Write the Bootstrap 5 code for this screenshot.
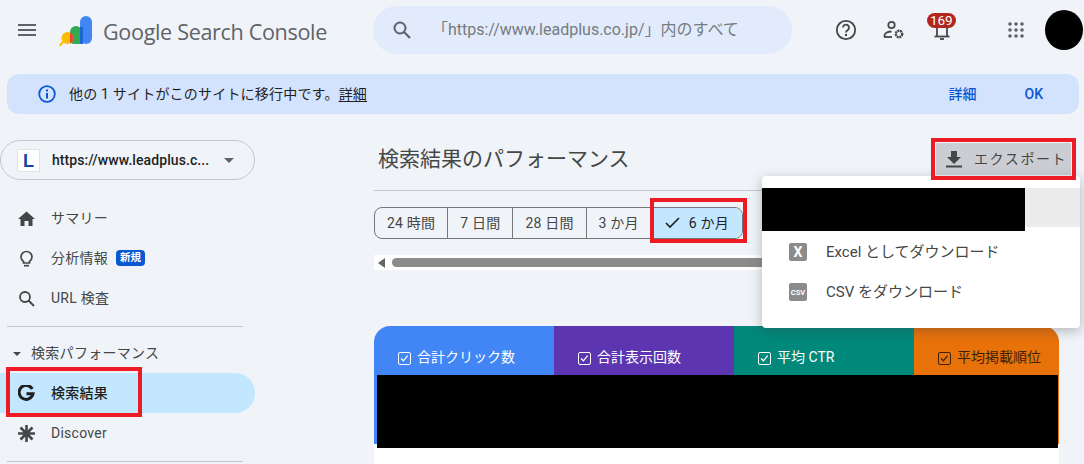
<!doctype html>
<html lang="ja"><head><meta charset="utf-8"><title>Google Search Console</title>
<link href="https://cdn.jsdelivr.net/npm/bootstrap@5.3.0/dist/css/bootstrap.min.css" rel="stylesheet">
<style>
html,body{height:464px;overflow:hidden}
body{background:#f0f4f9;font-family:Roboto,"Noto Sans CJK JP",sans-serif;color:#444746;width:1084px;position:relative}
.topbar{height:60px;padding:0 0 0 16px}
.ico{flex:none;display:block}
.gsc-logo{margin:3px 0 0 22px}
.brand-name{color:#5f6368;margin-left:11px;padding-top:5px;white-space:nowrap;font-family:"Open Sans",Roboto,sans-serif;font-size:21.6px;letter-spacing:-.35px}
.searchbox{width:419px;height:48px;background:#e1ebfc;border-radius:24px;margin-left:46px;padding-left:19px;color:#757b80;font-size:16px;white-space:nowrap}
.searchbox span{margin-left:20px}
.acts{margin-left:30px;gap:0}
.act{width:48px;height:48px;position:relative}
.cnt{position:absolute;left:9px;top:7px;background:#b3261e;color:#fff;font-size:13.5px;line-height:15px;border-radius:8px;padding:0 3px;font-weight:400}
.appsbtn{margin-left:26px}
.avatar{width:38px;height:40px;background:#000;border-radius:50%;margin-left:5px}
.banner{margin:14px 5px 0 7px;height:40px;background:#d3e3fd;border-radius:12px;font-size:14px;letter-spacing:.2px;color:#1f1f1f;padding-left:31px}
.banner u{text-underline-offset:2px}
.banner-msg{margin-left:5px}
.banner .lnk{color:#0b57d0;font-weight:500;letter-spacing:0}
.shell{margin-top:26px}
.side{width:255px;flex:none}
.prop{height:40px;width:255px;border:1px solid #c7c7c7;border-radius:20px;padding-left:16px;font-size:14px;letter-spacing:.08px;color:#1f1f1f;font-weight:500;white-space:nowrap}
.favi{width:23px;height:23px;background:#fff;border:1px solid #e3e3e3;color:#0d47a1;font:700 18px/22px "Liberation Sans",sans-serif;text-align:center;margin-right:12px;letter-spacing:0}
.caret{width:0;height:0;border:5px solid transparent;border-top-color:#5f6368;border-bottom:0;margin-left:15px}
.navlist{margin-top:18px}
.item{height:40px;padding-left:18px;font-size:14px;letter-spacing:.25px;color:#444746;border-radius:0 20px 20px 0}
.item .ico{margin-right:16px}
.item.on{background:#c2e7ff;color:#1f1f1f;font-weight:500}
.newtag{background:#0b57d0;color:#fff;font-size:10.5px;font-weight:700;line-height:16px;border-radius:4px;padding:0 4px;margin-left:8px;letter-spacing:0}
.rule{height:1px;background:#c7c7c7;margin:8px 12px 0 7px}
.sect{height:46px;padding:7px 0 0 13px;font-size:14px;letter-spacing:.3px;margin-bottom:0;font-weight:400;color:#444746}
.sect i{width:0;height:0;border:4px solid transparent;border-top-color:#444746;border-bottom:0;margin-right:10px}
.main{width:685px;margin-left:119px;flex:none}
.titlebar{height:51px;border-bottom:1px solid #c7c7c7;padding-left:4px}
.pagetitle{font-size:21px;font-weight:400;margin:0;color:#444746;position:relative;top:-5px}
.exportb{position:absolute;left:936px;top:143px;width:135px;height:32px;background:#cbcdd2;font-size:14px;color:#444746;padding-left:9px;letter-spacing:1.6px;white-space:nowrap}
.exportb svg{margin-right:11px}
.chips{margin-top:16px;height:32px}
.chipset{border:1px solid #747775;border-radius:8px;height:32px;overflow:hidden;font-size:14px;color:#444746;letter-spacing:.2px;width:369px}
.chipx{padding:0 12px;height:100%;border-right:1px solid #747775;white-space:nowrap}
.chipx.sel{background:#c2e7ff;border-right:0;flex:1;padding-left:13px;color:#1f1f1f}
.chipx.sel svg{margin-right:9px}
.sbar{margin-top:16px;height:15px;background:#fff;padding:3px 0 3px 4px;overflow:hidden}
.sbar i{width:0;height:0;border:5px solid transparent;border-right:7px solid #666;border-left:0;margin:0 7px 0 0}
.sbar b{flex:1;height:9px;background:#8b8b8b;border-radius:5px 0 0 5px}
.tilecard{margin-top:56px;height:138px;background:#fff;border-radius:16px 16px 0 0;overflow:hidden;position:relative}
.tiles{height:118px}
.tilex{width:180px;color:#fff;font-size:14px;padding:21px 0 0 24px;white-space:nowrap;gap:6px;align-items:flex-start}
.t1{background:#4285f4}.t2{background:#5e35b1}.t3{background:#00897b}.t4{background:#e8710a;width:145px;color:#3a2208}
.redact{position:absolute;background:#000}
.redact.main-r{left:3px;top:49px;right:1px;height:73px}
.ckb{width:13px;height:13px;border:1.500px solid currentColor;border-radius:2px;flex:none;margin-top:5px;display:block}
.menu{position:absolute;left:762px;top:176px;width:318px;height:152px;background:#fff;border-radius:4px;box-shadow:0 3px 12px rgba(60,64,67,.35);font-size:15px;color:#444746;z-index:5}
.menu-top{margin-top:16px;margin-bottom:5px;height:39px;background:#ececec}
.menu-top div{width:263px;height:43px;background:#000;margin-top:-4px}
.mrow{height:40px;padding-left:27px}
.mrow svg{margin-right:19px}
.mark-red{position:absolute;border:4px solid #ed1c24;z-index:8;pointer-events:none}
</style></head><body>
<header class="topbar d-flex align-items-center">
<svg class="ico" width="20" height="20" viewBox="0 0 20 20"><path fill="#5f6368" d="M2 4h18v2H2zM2 9h18v2H2zM2 14h18v2H2z"/></svg>
<svg class="ico gsc-logo" width="34" height="34" viewBox="0 0 34 34"><path fill="#fbbc04" d="M1 30l5-6 1.500 1.500-5 6z"/><rect x="22" y="1" width="12" height="28" rx="6" fill="#4285f4"/><path fill="#34a853" d="M12 17a6 6 0 0 1 6-6 6 6 0 0 1 6 6v12H16a4 4 0 0 1-4-4z"/><path fill="#1967d2" d="M22 12h3v17h-3z"/><circle cx="9.500" cy="23" r="6" fill="#fbbc04"/><path fill="#ea4335" d="M12 17.600a6 6 0 0 1 0 10.800z"/></svg>
<div class="brand-name">Google Search Console</div>
<div class="searchbox d-flex align-items-center">
<svg class="ico" width="20" height="20" viewBox="0 0 20 20"><circle cx="8" cy="8" r="5.500" fill="none" stroke="#5f6368" stroke-width="2"/><path stroke="#5f6368" stroke-width="2.200" d="M12 12l6 6"/></svg>
<span>「https://www.leadplus.co.jp/」内のすべて</span></div>
<div class="acts d-flex align-items-center">
<div class="act d-flex align-items-center justify-content-center"><svg width="22" height="22" viewBox="0 0 22 22"><circle cx="11" cy="11" r="9.200" fill="none" stroke="#444746" stroke-width="1.800"/><path d="M8 8.600a3 3 0 1 1 4.800 2.400c-1 .7-1.800 1.200-1.800 2.600" fill="none" stroke="#444746" stroke-width="1.800"/><circle cx="11" cy="16" r="1.200" fill="#444746"/></svg></div>
<div class="act d-flex align-items-center justify-content-center"><svg width="22" height="22" viewBox="0 0 22 22"><circle cx="8.500" cy="6" r="3.200" fill="none" stroke="#444746" stroke-width="1.800"/><path d="M1.500 18v-1.500c0-2.500 3.500-4 7-4" fill="none" stroke="#444746" stroke-width="1.800"/><path d="M1 18h8" stroke="#444746" stroke-width="1.800"/><circle cx="16" cy="15" r="3.200" fill="none" stroke="#444746" stroke-width="2.400" stroke-dasharray="2 .6"/></svg></div>
<div class="act d-flex align-items-center justify-content-center"><svg width="20" height="22" viewBox="0 0 20 22"><path d="M5 18V9a5 5 0 0 1 10 0v9" fill="none" stroke="#444746" stroke-width="1.800"/><path d="M2.500 17.500h15" stroke="#444746" stroke-width="1.800"/><path d="M8 20h4" stroke="#444746" stroke-width="1.800"/></svg><span class="cnt">169</span></div>
<div class="act appsbtn d-flex align-items-center justify-content-center"><svg width="18" height="18" viewBox="0 0 18 18" fill="#5f6368"><circle cx="3" cy="3" r="1.800"/><circle cx="9" cy="3" r="1.800"/><circle cx="15" cy="3" r="1.800"/><circle cx="3" cy="9" r="1.800"/><circle cx="9" cy="9" r="1.800"/><circle cx="15" cy="9" r="1.800"/><circle cx="3" cy="15" r="1.800"/><circle cx="9" cy="15" r="1.800"/><circle cx="15" cy="15" r="1.800"/></svg></div>
<div class="avatar flex-shrink-0"></div>
</div>
</header>
<div class="banner d-flex align-items-center">
<svg class="ico me-2" width="18" height="18" viewBox="0 0 18 18"><circle cx="9" cy="9" r="7.800" fill="none" stroke="#0b57d0" stroke-width="1.800"/><path fill="#0b57d0" d="M8 8h2v5.500H8zM8 4.500h2v2H8z"/></svg>
<div class="banner-msg">他の 1 サイトがこのサイトに移行中です。<u>詳細</u></div>
<div class="lnk ms-auto">詳細</div><div class="lnk" style="margin-left:48px;margin-right:36px">OK</div>
</div>
<div class="shell d-flex">
<nav class="side">
<div class="prop d-flex align-items-center"><div class="favi">L</div>https://www.leadplus.c...<i class="caret"></i></div>
<div class="navlist">
<div class="item d-flex align-items-center"><svg class="ico" width="17" height="17" viewBox="0 0 17 17"><path fill="#444746" d="M8.500 1.500L0 9h2.500v7h4v-5h4v5h4V9H17z"/></svg>サマリー</div>
<div class="item d-flex align-items-center"><svg class="ico" width="17" height="19" viewBox="0 0 17 19"><path d="M5.500 12.500c-1.500-1-2.500-2.500-2.500-4.500a5.500 5.500 0 0 1 11 0c0 2-1 3.500-2.500 4.500v1.500h-6z" fill="none" stroke="#444746" stroke-width="1.700"/><path stroke="#444746" stroke-width="1.700" d="M6 16.700h5"/></svg>分析情報<span class="newtag">新規</span></div>
<div class="item d-flex align-items-center"><svg class="ico" width="17" height="17" viewBox="0 0 17 17"><circle cx="7" cy="7" r="5" fill="none" stroke="#444746" stroke-width="1.800"/><path stroke="#444746" stroke-width="2" d="M10.500 10.500l5.500 5.500"/></svg>URL 検査</div>
</div>
<div class="rule"></div>
<div class="sect d-flex align-items-center"><i></i>検索パフォーマンス</div>
<div class="item on d-flex align-items-center"><svg class="ico" width="17" height="17" viewBox="0 0 17 17"><path fill="none" stroke="#1f1f1f" stroke-width="3" d="M14.300 4a7 7 0 1 0 .7 4.800H8.500"/></svg>検索結果</div>
<div class="item d-flex align-items-center"><svg class="ico" width="17" height="17" viewBox="0 0 17 17"><path stroke="#444746" stroke-width="2.600" d="M8.500 0v17M0 8.500h17M2.500 2.500l12 12M14.500 2.500l-12 12"/></svg>Discover</div>
<div class="rule"></div>
</nav>
<main class="main">
<div class="titlebar d-flex align-items-center"><h1 class="pagetitle">検索結果のパフォーマンス</h1></div>
<div class="chips"><div class="chipset d-flex align-items-center">
<div class="chipx d-flex align-items-center">24 時間</div><div class="chipx d-flex align-items-center">7 日間</div><div class="chipx d-flex align-items-center">28 日間</div><div class="chipx d-flex align-items-center">3 か月</div>
<div class="chipx sel d-flex align-items-center"><svg width="15" height="12" viewBox="0 0 15 12"><path d="M1 6l4 4 9-9" fill="none" stroke="#1f1f1f" stroke-width="1.600"/></svg>6 か月</div>
</div></div>
<div class="sbar d-flex align-items-center"><i></i><b></b></div>
<section class="tilecard">
<div class="tiles d-flex">
<div class="tilex t1 d-flex"><svg class="ckb" viewBox="0 0 13 13"><path d="M2.500 6.500l2.700 2.700 5-6" fill="none" stroke="currentColor" stroke-width="1.500"/></svg>合計クリック数</div>
<div class="tilex t2 d-flex"><svg class="ckb" viewBox="0 0 13 13"><path d="M2.500 6.500l2.700 2.700 5-6" fill="none" stroke="currentColor" stroke-width="1.500"/></svg>合計表示回数</div>
<div class="tilex t3 d-flex"><svg class="ckb" viewBox="0 0 13 13"><path d="M2.500 6.500l2.700 2.700 5-6" fill="none" stroke="currentColor" stroke-width="1.500"/></svg>平均 CTR</div>
<div class="tilex t4 d-flex"><svg class="ckb" viewBox="0 0 13 13"><path d="M2.500 6.500l2.700 2.700 5-6" fill="none" stroke="currentColor" stroke-width="1.500"/></svg>平均掲載順位</div>
</div>
<div class="redact main-r"></div>
</section>
</main>
</div>
<div class="exportb d-flex align-items-center"><svg width="18" height="18" viewBox="0 0 18 18"><path fill="#444746" d="M6 1h6v6h4l-7 7-7-7h4zM1 15.500h16V17.500H1z"/></svg>エクスポート</div>
<div class="menu">
<div class="menu-top"><div></div></div>
<div class="mrow d-flex align-items-center"><svg width="18" height="18" viewBox="0 0 18 18"><rect width="18" height="18" rx="2" fill="#8b8b8b"/><text x="9" y="14" font-size="14" font-weight="700" fill="#fff" text-anchor="middle" font-family="Roboto">X</text></svg>Excel としてダウンロード</div>
<div class="mrow d-flex align-items-center"><svg width="18" height="18" viewBox="0 0 18 18"><rect width="18" height="18" rx="2" fill="#8b8b8b"/><text x="9" y="12" font-size="7.500" font-weight="700" fill="#fff" text-anchor="middle" font-family="Roboto">CSV</text></svg>CSV をダウンロード</div>
</div>
<div class="mark-red" style="left:931px;top:138px;width:145px;height:42px"></div>
<div class="mark-red" style="left:650px;top:198px;width:97px;height:45px"></div>
<div class="mark-red" style="left:6px;top:367px;width:136px;height:50px"></div>
<script src="https://cdn.jsdelivr.net/npm/bootstrap@5.3.0/dist/js/bootstrap.bundle.min.js"></script>
</body></html>
